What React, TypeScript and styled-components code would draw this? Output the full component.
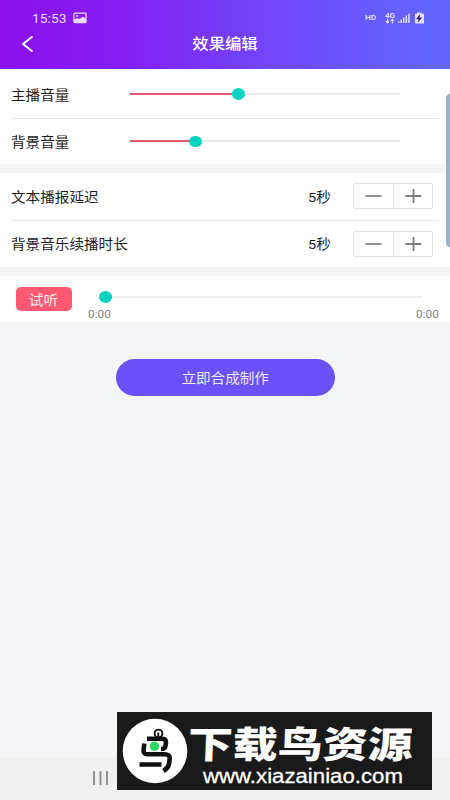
import React from "react";
import styled, { createGlobalStyle } from "styled-components";

const sans = `Roboto, "Noto Sans CJK SC", sans-serif`;

const GlobalStyle = createGlobalStyle`
  * { box-sizing: border-box; }
  body { margin: 0; background: #f4f5f7; font-family: ${sans}; }
`;

const Screen = styled.div`
  position: relative;
  display: flex;
  flex-direction: column;
  width: 450px;
  height: 800px;
  overflow: hidden;
  background: #f4f5f7;
`;

const Header = styled.header`
  height: 69px;
  display: flex;
  flex-direction: column;
  flex: none;
  background: linear-gradient(90deg, #8b10ee 0%, #8420f3 30%, #753cf8 50%, #6a54fb 75%, #6168ff 100%);
`;

const StatusBar = styled.div`
  height: 29px;
  flex: none;
  padding: 7px 25px 0 32px;
  display: flex;
  justify-content: space-between;
  align-items: center;
  color: #eadcff;
`;

const StatusGroup = styled.div`
  display: flex;
  align-items: center;
`;

const Wide = styled.span<{ $size: number; $scale?: number; $origin?: string; $weight?: number }>`
  display: inline-block;
  white-space: nowrap;
  font-size: ${(p) => p.$size}px;
  line-height: 20px;
  font-weight: ${(p) => p.$weight ?? 400};
  transform: scaleX(${(p) => p.$scale ?? 1.09});
  transform-origin: ${(p) => p.$origin ?? "left"} center;
`;

const Clock = styled.div`
  width: 41px;
`;

const TitleBar = styled.div`
  height: 30px;
  display: grid;
  grid-template-columns: 60px 1fr 60px;
  align-items: center;
  color: #fff;
`;

const Title = styled.h1`
  margin: 0;
  font-size: 15px;
  line-height: 20px;
  font-weight: 500;
  text-align: center;
  transform: scaleX(1.09);
`;

const BackIcon = styled.svg`
  width: 14px;
  height: 18px;
  margin-left: 21px;
  display: block;
`;

const Panel = styled.section<{ $gap: number }>`
  flex: none;
  margin-bottom: ${(p) => p.$gap}px;
  background: #fff;
`;

const Row = styled.div<{ $height: number; $top?: number }>`
  height: ${(p) => p.$height}px;
  padding: ${(p) => p.$top ?? 0}px 17px 0 11px;
  display: flex;
  align-items: center;
`;

const Divider = styled.div`
  height: 1px;
  margin: 0 11px;
  background: #e6e6e8;
`;

const Label = styled.div`
  width: 119px;
  padding-top: 2px;
  color: #1c1c1c;
`;

const Track = styled.div<{ $width: number; $value: number }>`
  width: ${(p) => p.$width}px;
  height: 12px;
  display: flex;
  align-items: center;
  background: linear-gradient(
      to right,
      #e2566e ${(p) => p.$value}px,
      #ebebeb ${(p) => p.$value}px
    )
    center / 100% 2px no-repeat;
`;

const Thumb = styled.div<{ $value: number }>`
  width: 13px;
  height: 11.5px;
  margin-left: ${(p) => p.$value - 6.5}px;
  border-radius: 50%;
  background: #04d4bf;
`;

const Seconds = styled.div`
  width: 24px;
  margin-left: auto;
  margin-right: 21px;
  padding-top: 2px;
  color: #1c1c1c;
`;

const Stepper = styled.div`
  width: 80px;
  height: 26px;
  display: grid;
  grid-template-columns: 1fr 1fr;
  border: 1px solid #e2e2e2;
  border-radius: 2px;
`;

const StepButton = styled.button`
  display: flex;
  align-items: center;
  justify-content: center;
  padding: 0;
  border: 0;
  background: none;
  & + & {
    border-left: 1px solid #e2e2e2;
  }
`;

const Player = styled.div`
  height: 46px;
  padding: 11px 11px 0 16px;
  display: flex;
`;

const ListenButton = styled.button`
  width: 55.5px;
  height: 24px;
  padding: 3px 0 0;
  border: 0;
  border-radius: 5px;
  background: #fe5873;
  color: #ffeef0;
  font-family: inherit;
`;

const Timeline = styled.div`
  flex: 1;
  margin-left: 16px;
  display: flex;
  flex-direction: column;
`;

const TrackSlot = styled.div`
  padding: 4px 0 0 18px;
`;

const Times = styled.div`
  display: flex;
  justify-content: space-between;
  margin-top: 2px;
  color: #858585;
`;

const SubmitButton = styled.button`
  flex: none;
  align-self: center;
  width: 219px;
  height: 37px;
  margin-top: 36.5px;
  padding-top: 4px;
  border: 0;
  border-radius: 19px;
  background: #6c50f8;
  color: #eeeaff;
  font-family: inherit;
`;

const NavBar = styled.nav`
  height: 43px;
  margin-top: auto;
  padding: 13px 0 0 92px;
  background: #f0f0f1;
`;

const EdgeHandle = styled.div`
  position: absolute;
  right: -4px;
  top: 94px;
  width: 8.5px;
  height: 153px;
  border-radius: 4px;
  background: #9bb3ca;
`;

const Watermark = styled.aside`
  position: absolute;
  left: 117px;
  top: 712px;
  width: 315px;
  height: 78px;
  padding-left: 5px;
  display: flex;
  align-items: center;
  background: #1a1a1a;
  color: #fff;
`;

const Brand = styled.div`
  height: 78px;
  padding-top: 9px;
  display: flex;
  flex-direction: column;
`;

const BrandName = styled.div`
  height: 44px;
  font: 900 42px/42px "Noto Sans CJK SC", sans-serif;
  white-space: nowrap;
  transform: scale(1.07, 0.88) skewX(-2deg);
  transform-origin: left center;
`;

const BrandUrl = styled.div`
  margin: 0 0 0 15px;
  font: 20px/22px "Liberation Sans", sans-serif;
  -webkit-text-stroke: 0.3px #fff;
  white-space: nowrap;
  transform: scaleX(1.11);
  transform-origin: left center;
`;

const PhotoIcon = () => (
  <svg width="14" height="12" viewBox="0 0 14 12">
    <rect x="1" y="1.2" width="12" height="9.4" rx=".8" fill="none" stroke="#eadcff" strokeWidth="1.3" />
    <circle cx="4.3" cy="4" r="1.1" fill="#eadcff" />
    <path d="M1 8 4.2 6 6.4 7 9.8 4.8 13 6.8V10.6H1Z" fill="#eadcff" />
  </svg>
);

const StatusIcons = () => (
  <svg width="61" height="16" viewBox="364 10 61 16" fill="#e4e0ff">
    <text x="365" y="20.2" fontSize="7.6" fontWeight="600" textLength="11.2" lengthAdjust="spacingAndGlyphs">HD</text>
    <text x="385" y="18" fontSize="7.6" fontWeight="600" textLength="10" lengthAdjust="spacingAndGlyphs">4G</text>
    <path d="M387.5 18.7v4.2m-1.7-1.7 1.7 1.7 1.7-1.7M392.3 23.4v-4.2m-1.7 1.7 1.7-1.7 1.7 1.7" fill="none" stroke="#e4e0ff" strokeWidth="1.1" />
    <path d="M398 21.5h1.5V23H398zM400.5 19.5h1.5V23h-1.5zM403 17.5h1.5V23H403zM405.6 15.5h1.5V23h-1.5zM408.2 13.5h1.5V23h-1.5z" />
    <path d="M417 12.5h4.5v1.3h2.5v9.7h-9V13.8h2Z" />
    <path d="m419.8 14.6-3.3 4.4h2.4l-.7 3 3.5-4.2h-2.3Z" fill="#302465" stroke="#302465" strokeWidth=".5" />
  </svg>
);

const BirdLogo = () => (
  <svg width="66" height="66" viewBox="0 0 66 66">
    <circle cx="33" cy="33" r="32.3" fill="#fff" />
    <g fill="none" stroke="#111" strokeWidth="4.6">
      <path d="M25 20.7H40.5Q44 20.7 44 24.5L43.3 28.5Q42.8 31 39 31" />
      <path d="M22.3 25.5 21.6 32Q21.3 36.3 25.5 36.3H42.5Q48 36.3 47.7 40.5L47 46Q46.3 50 41.5 53M17.5 46.5H39.5" />
    </g>
    <circle cx="36.5" cy="15.5" r="3.9" fill="none" stroke="#111" strokeWidth="1.9" />
    <path d="M36.3 14.5V20" stroke="#111" strokeWidth="1.9" />
    <circle cx="32.5" cy="28.3" r="4.7" fill="#27dc60" />
  </svg>
);

const VolumeRow = ({ label, value, height, top }: { label: string; value: number; height: number; top?: number }) => (
  <Row $height={height} $top={top}>
    <Label><Wide $size={13.4}>{label}</Wide></Label>
    <Track $width={270} $value={value}><Thumb $value={value} /></Track>
  </Row>
);

const DelayRow = ({ label, height }: { label: string; height: number }) => (
  <Row $height={height}>
    <Label><Wide $size={13.4}>{label}</Wide></Label>
    <Seconds><Wide $size={13.4}>5秒</Wide></Seconds>
    <Stepper>
      <StepButton aria-label="减少">
        <svg width="17" height="16" viewBox="0 0 17 16"><path d="M.5 8h16" stroke="#858585" strokeWidth="1.8" /></svg>
      </StepButton>
      <StepButton aria-label="增加">
        <svg width="17" height="16" viewBox="0 0 17 16"><path d="M.5 8h16M8.5 1v14" stroke="#7c7c7c" strokeWidth="1.8" /></svg>
      </StepButton>
    </Stepper>
  </Row>
);

export default function App() {
  return (
    <>
      <GlobalStyle />
      <Screen>
        <Header>
          <StatusBar>
            <StatusGroup>
              <Clock><Wide $size={12.8} $scale={1.08}>15:53</Wide></Clock>
              <PhotoIcon />
            </StatusGroup>
            <StatusIcons />
          </StatusBar>
          <TitleBar>
            <BackIcon viewBox="0 0 14 18">
              <path d="M11.5 1.5 2 9l9.5 7.5" fill="none" stroke="#fff" strokeWidth="1.9" />
            </BackIcon>
            <Title>效果编辑</Title>
          </TitleBar>
        </Header>
        <Panel $gap={9}>
          <VolumeRow label="主播音量" value={108} height={48.5} top={1.5} />
          <Divider />
          <VolumeRow label="背景音量" value={65} height={45.5} />
        </Panel>
        <Panel $gap={9}>
          <DelayRow label="文本播报延迟" height={46.5} />
          <Divider />
          <DelayRow label="背景音乐续播时长" height={46.5} />
        </Panel>
        <Panel $gap={0}>
          <Player>
            <ListenButton><Wide $size={13.4} $origin="center">试听</Wide></ListenButton>
            <Timeline>
              <TrackSlot><Track $width={316} $value={0}><Thumb $value={0} /></Track></TrackSlot>
              <Times>
                <Wide $size={10.8} $scale={1.1}>0:00</Wide>
                <Wide $size={10.8} $scale={1.1} $origin="right">0:00</Wide>
              </Times>
            </Timeline>
          </Player>
        </Panel>
        <SubmitButton><Wide $size={13.4} $origin="center">立即合成制作</Wide></SubmitButton>
        <NavBar>
          <svg width="17" height="14" viewBox="0 0 17 14"><path d="M2 0v14M8.5 0v14M15 0v14" stroke="#888" strokeWidth="1.8" /></svg>
        </NavBar>
        <EdgeHandle />
        <Watermark>
          <BirdLogo />
          <Brand>
            <BrandName>下载鸟资源</BrandName>
            <BrandUrl>www.xiazainiao.com</BrandUrl>
          </Brand>
        </Watermark>
      </Screen>
    </>
  );
}
